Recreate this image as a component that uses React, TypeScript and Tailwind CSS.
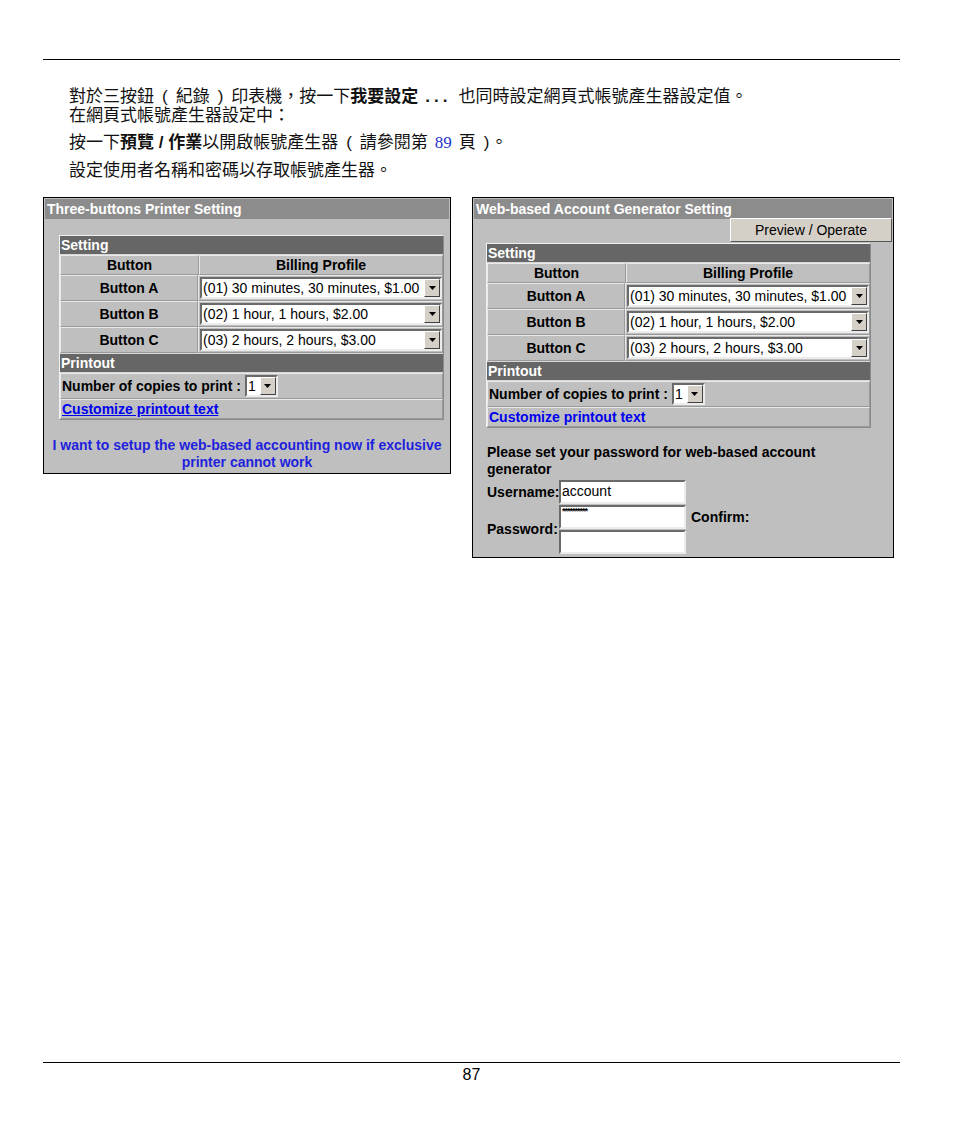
import React from "react"

const sans = "font-['Liberation_Sans','Noto_Sans_CJK_TC',Arial,sans-serif]"

function Arrow() {
  return (
    <div className="flex h-full w-[16px] shrink-0 items-center justify-center border border-t-white border-l-white border-b-[#404040] border-r-[#404040] bg-[#d4d0c8]">
      <svg width="7" height="4" viewBox="0 0 7 4">
        <polygon points="0,0 7,0 3.5,4" fill="#000" />
      </svg>
    </div>
  )
}

function Select({ value, width }: { value: string; width: string }) {
  return (
    <div
      className={`${width} flex h-[22px] items-stretch border-2 border-t-[#6a6a6a] border-l-[#6a6a6a] border-b-[#ececec] border-r-[#ececec] bg-white`}
    >
      <span className="flex-1 overflow-hidden whitespace-nowrap pl-[1px] text-[14px] leading-[18px] text-black">
        {value}
      </span>
      <Arrow />
    </div>
  )
}

function TextBox({ value, small }: { value?: string; small?: boolean }) {
  return (
    <div className="h-[24px] w-[127px] border-2 border-t-[#6a6a6a] border-l-[#6a6a6a] border-b-[#ececec] border-r-[#ececec] bg-white">
      {small ? (
        <span className="block pl-[1px] text-[9px] leading-[9px] tracking-[-1px] text-black">**********</span>
      ) : (
        <span className="block pl-[1px] text-[14px] leading-[19px] text-black">{value}</span>
      )}
    </div>
  )
}

const profiles = [
  { name: "Button A", value: "(01) 30 minutes, 30 minutes, $1.00" },
  { name: "Button B", value: "(02) 1 hour, 1 hours, $2.00" },
  { name: "Button C", value: "(03) 2 hours, 2 hours, $3.00" },
]

const cell = "border-t border-l border-t-[#e9e9e9] border-l-[#e9e9e9] border-b border-r border-b-[#9a9a9a] border-r-[#9a9a9a]"

function SettingTable({ underline }: { underline?: boolean }) {
  return (
    <div className="w-[385px] border border-t-[#f0f0f0] border-l-[#f0f0f0] border-b-[#8a8a8a] border-r-[#8a8a8a] text-[14px] font-bold">
      <div className="h-[19px] border-b border-[#d8d8d8] bg-[#666666] pl-[1px] leading-[19px] text-white">Setting</div>
      <div className="flex h-[20px]">
        <div className={`${cell} flex w-[139px] items-center justify-center`}>Button</div>
        <div className={`${cell} flex flex-1 items-center justify-center`}>Billing Profile</div>
      </div>
      {profiles.map((p) => (
        <div key={p.name} className="flex h-[26px]">
          <div className={`${cell} flex w-[139px] items-center justify-center`}>{p.name}</div>
          <div className={`${cell} flex flex-1 items-center pl-[1px] font-normal`}>
            <Select value={p.value} width="w-[242px]" />
          </div>
        </div>
      ))}
      <div className="h-[20px] border-y border-[#d8d8d8] bg-[#666666] pl-[1px] leading-[18px] text-white">Printout</div>
      <div className={`${cell} flex h-[26px] items-center gap-[4px] pl-[1px]`}>
        <span>Number of copies to print :</span>
        <div className="font-normal">
          <Select value="1" width="w-[33px]" />
        </div>
      </div>
      <div className={`${cell} flex h-[20px] items-center pl-[1px]`}>
        <span className={`text-[#0000ee] ${underline ? "underline" : ""}`}>Customize printout text</span>
      </div>
    </div>
  )
}

function TitleBar({ children }: { children: React.ReactNode }) {
  return (
    <div className="mx-[1px] mt-[1px] h-[20px] bg-[#8c8c8c] pl-[2px] text-[14px] font-bold leading-[20px] text-white">
      {children}
    </div>
  )
}

export default function App() {
  return (
    <div className={`${sans} flex h-[1132px] w-[954px] flex-col bg-white text-black`}>
      <div className="ml-[43px] mt-[59px] w-[857px] border-t border-black" />

      {/* intro text */}
      <div className="ml-[69px] mt-[27px] text-[17px] text-[#111]">
        <p className="leading-[19px]">
          對於三按鈕<span className="mx-[8px]">(</span>紀錄<span className="mx-[8px]">)</span>印表機，按一下
          <b>我要設定</b>
          <b className="mx-[7px] tracking-[4px]">...</b>
          也同時設定網頁式帳號產生器設定值。
        </p>
        <p className="leading-[19px]">在網頁式帳號產生器設定中：</p>
        <p className="mt-[8px] leading-[19px]">
          按一下<b>預覽 / 作業</b>以開啟帳號產生器<span className="mx-[8px]">(</span>請參閱第
          <span className="mx-[7px] font-['Liberation_Serif',serif] text-[#2233cc]">89</span>頁
          <span className="mx-[8px]">)</span>
          <span className="-ml-[7px]">。</span>
        </p>
        <p className="mt-[9px] leading-[19px]">設定使用者名稱和密碼以存取帳號產生器。</p>
      </div>

      {/* screenshots */}
      <div className="ml-[43px] mt-[17px] flex items-start gap-[21px]">
        <div className="h-[277px] w-[408px] border border-black bg-[#bfbfbf]">
          <TitleBar>Three-buttons Printer Setting</TitleBar>
          <div className="ml-[15px] mt-[16px]">
            <SettingTable underline />
          </div>
          <p className="mt-[17px] text-center text-[14px] font-bold leading-[17px] text-[#1f1fdd]">
            I want to setup the web-based accounting now if exclusive
            <br />
            printer cannot work
          </p>
        </div>

        <div className="h-[361px] w-[422px] border border-black bg-[#bfbfbf]">
          <TitleBar>Web-based Account Generator Setting</TitleBar>
          <div className="-mt-[1px] flex justify-end pr-[1px]">
            <button className="h-[24px] w-[162px] border border-t-white border-l-white border-b-[#555] border-r-[#555] bg-[#d4d0c8] text-[14px] leading-[20px] text-black">
              Preview / Operate
            </button>
          </div>
          <div className="ml-[13px] mt-[1px]">
            <SettingTable />
          </div>
          <div className="ml-[14px] mt-[16px] text-[14px] font-bold">
            <p className="leading-[17px]">
              Please set your password for web-based account
              <br />
              generator
            </p>
            <div className="mt-[2px] flex items-center">
              <span className="w-[72px]">Username:</span>
              <div className="font-normal">
                <TextBox value="account" />
              </div>
            </div>
            <div className="mt-[1px] flex items-center">
              <span className="w-[72px]">Password:</span>
              <div className="flex flex-col gap-[1px]">
                <TextBox small />
                <TextBox />
              </div>
              <span className="mb-[24px] ml-[5px]">Confirm:</span>
            </div>
          </div>
        </div>
      </div>

      {/* footer */}
      <div className="ml-[43px] mt-auto mb-[48px] w-[857px] border-t border-black">
        <p className="mt-[2px] text-center text-[16px] leading-[19px]">87</p>
      </div>
    </div>
  )
}
